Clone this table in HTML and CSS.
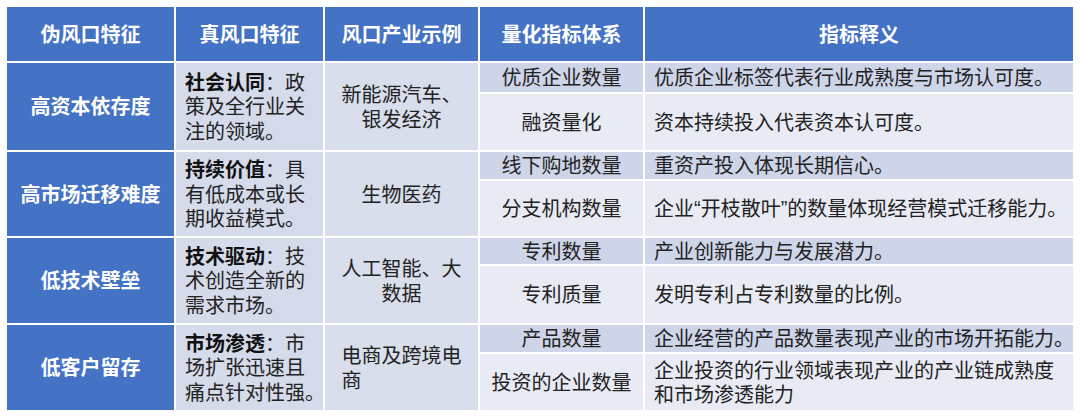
FILE: index.html
```html
<!DOCTYPE html>
<html lang="zh">
<head>
<meta charset="utf-8">
<title>伪风口与真风口特征</title>
<link rel="stylesheet" href="styles.css">
</head>
<body>
<div class="table">
  <div class="cell head">伪风口特征</div>
  <div class="cell head">真风口特征</div>
  <div class="cell head">风口产业示例</div>
  <div class="cell head">量化指标体系</div>
  <div class="cell head">指标释义</div>

  <div class="cell fake">高资本依存度</div>
  <div class="cell real"><p><b>社会认同</b>：政<br>策及全行业关<br>注的领域。</p></div>
  <div class="cell ex">新能源汽车、<br>银发经济</div>
  <div class="cell ind odd">优质企业数量</div>
  <div class="cell def odd">优质企业标签代表行业成熟度与市场认可度。</div>
  <div class="cell ind even">融资量化</div>
  <div class="cell def even">资本持续投入代表资本认可度。</div>

  <div class="cell fake">高市场迁移难度</div>
  <div class="cell real"><p><b>持续价值</b>：具<br>有低成本或长<br>期收益模式。</p></div>
  <div class="cell ex">生物医药</div>
  <div class="cell ind odd">线下购地数量</div>
  <div class="cell def odd">重资产投入体现长期信心。</div>
  <div class="cell ind even">分支机构数量</div>
  <div class="cell def even">企业<span class="q">“</span>开枝散叶<span class="q">”</span>的数量体现经营模式迁移能力。</div>

  <div class="cell fake">低技术壁垒</div>
  <div class="cell real"><p><b>技术驱动</b>：技<br>术创造全新的<br>需求市场。</p></div>
  <div class="cell ex">人工智能、大<br>数据</div>
  <div class="cell ind odd">专利数量</div>
  <div class="cell def odd">产业创新能力与发展潜力。</div>
  <div class="cell ind even">专利质量</div>
  <div class="cell def even">发明专利占专利数量的比例。</div>

  <div class="cell fake">低客户留存</div>
  <div class="cell real"><p><b>市场渗透</b>：市<br>场扩张迅速且<br>痛点针对性强。</p></div>
  <div class="cell ex ex-left"><p>电商及跨境电<br>商</p></div>
  <div class="cell ind odd">产品数量</div>
  <div class="cell def odd">企业经营的产品数量表现产业的市场开拓能力。</div>
  <div class="cell ind even">投资的企业数量</div>
  <div class="cell def even">企业投资的行业领域表现产业的产业链成熟度<br>和市场渗透能力</div>
</div>
</body>
</html>
```

FILE: styles.css
```css
html, body {
  margin: 0;
  padding: 0;
  background: #ffffff;
}

body {
  padding: 7px;
  font-family: "Noto Sans CJK SC", "Noto Sans", sans-serif;
  font-size: 20px;
  color: #222222;
}

.table {
  display: grid;
  width: 1066px;
  grid-template-columns: 167px 147px 153px 163px 428px;
  grid-template-rows: 54px 29px 56px 27px 55px 26px 57px 27px 56px;
  gap: 2px;
  background: #ffffff;
}

.cell {
  display: flex;
  align-items: center;
  line-height: 24.5px;
  white-space: nowrap;
}

.cell p {
  margin: 0;
}

.q {
  font-family: "Liberation Sans", "Noto Sans", sans-serif;
}

.head {
  background: #4472c4;
  color: #ffffff;
  font-weight: bold;
  justify-content: center;
}

.fake {
  grid-row: span 2;
  background: #4472c4;
  color: #ffffff;
  font-weight: bold;
  justify-content: center;
}

.real {
  grid-row: span 2;
  background: #d5dbea;
  padding-left: 9px;
}

.real b {
  color: #111111;
}

.ex {
  grid-row: span 2;
  background: #d8deec;
  justify-content: center;
  text-align: center;
}

.ex-left {
  text-align: left;
}

.ind {
  justify-content: center;
}

.def {
  padding-left: 9px;
}

.odd {
  background: #cfd5e9;
}

.even {
  background: #e8ebf4;
}
```
